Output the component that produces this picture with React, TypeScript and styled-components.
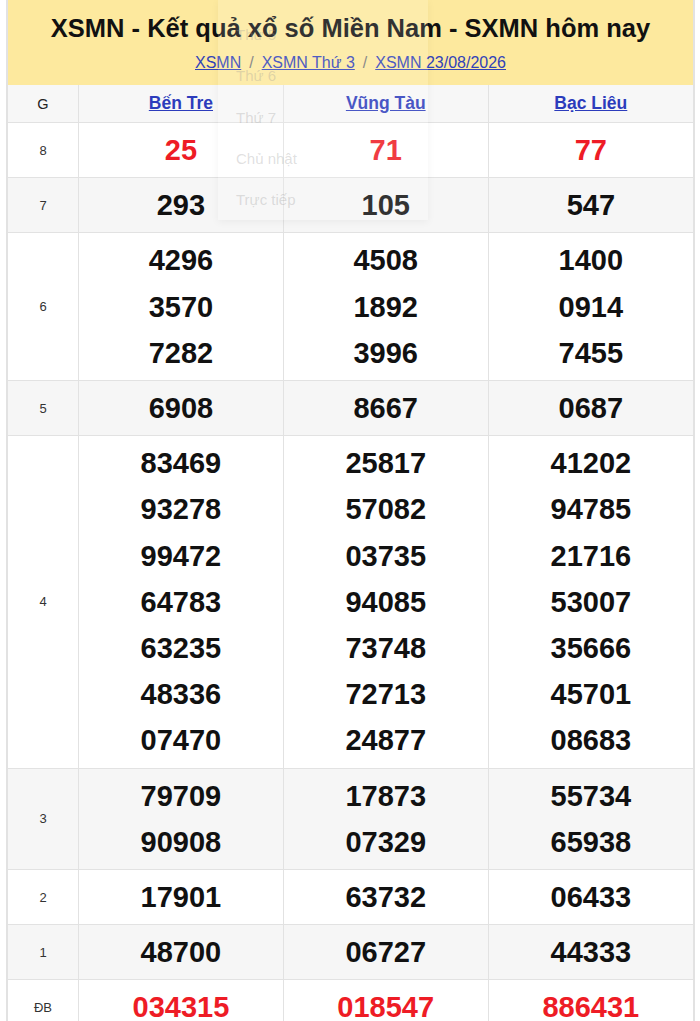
import React from "react";
import styled, { createGlobalStyle } from "styled-components";

const Global = createGlobalStyle`
  html, body { margin: 0; padding: 0; background: #fff; }
  body { font-family: "Liberation Sans", Arial, sans-serif; }
`;

const Page = styled.div`
  position: relative;
  width: 700px;
  height: 1021px;
  overflow: hidden;
`;

const Box = styled.div`
  margin-left: 6px;
  width: 689px;
  border-left: 2px solid #e2e2e2;
  border-right: 2px solid #e2e2e2;
  box-sizing: border-box;
`;

const Header = styled.div`
  background: #fde99e;
  height: 85px;
  box-sizing: border-box;
  padding-top: 13px;
  text-align: center;
`;

const Title = styled.h1`
  margin: 0;
  font-size: 25.5px;
  line-height: 31px;
  font-weight: bold;
  color: #111;
`;

const Crumbs = styled.div`
  margin-top: 10px;
  font-size: 16px;
  line-height: 18px;
  color: #777;
  display: flex;
  justify-content: center;
  gap: 8px;
`;

const Crumb = styled.a`
  color: #3142b8;
  text-decoration: underline;
`;

const Table = styled.table`
  width: 100%;
  border-collapse: collapse;
  table-layout: fixed;
`;

const Th = styled.th<{ $w?: number }>`
  width: ${(p) => (p.$w ? `${p.$w}px` : "auto")};
  height: 37px;
  padding: 0;
  background: #f7f7f7;
  border: 1px solid #e2e2e2;
  border-top: none;
  font-size: 17.5px;
  font-weight: bold;
  text-align: center;
  &:first-child { border-left: none; font-weight: normal; font-size: 14.5px; color: #222; }
  &:last-child { border-right: none; }
`;

const Prov = styled.a`
  color: #2c3cbc;
  text-decoration: underline;
`;

const Tr = styled.tr<{ $alt: boolean }>`
  background: ${(p) => (p.$alt ? "#f6f6f6" : "#fff")};
`;

const Label = styled.td`
  border: 1px solid #e2e2e2;
  border-left: none;
  text-align: center;
  font-size: 13px;
  color: #333;
  padding: 0;
`;

const Cell = styled.td<{ $red: boolean }>`
  border: 1px solid #e2e2e2;
  padding: 4px 0;
  text-align: center;
  font-size: 29px;
  font-weight: bold;
  line-height: 46.2px;
  color: ${(p) => (p.$red ? "#ee1c25" : "#111")};
  &:last-child { border-right: none; }
`;

const Num = styled.div``;

const Dropdown = styled.div`
  position: absolute;
  left: 218px;
  top: 0;
  width: 210px;
  height: 220px;
  background: rgba(255, 255, 255, 0.14);
  box-shadow: 0 2px 8px rgba(0, 0, 0, 0.05);
  padding: 14px 0 0 18px;
  box-sizing: border-box;
`;

const DropItem = styled.div`
  font-size: 15px;
  line-height: 41.3px;
  color: rgba(150, 150, 150, 0.3);
`;

type Row = { g: string; vals: string[][]; red?: boolean };

const rows: Row[] = [
  { g: "8", vals: [["25"], ["71"], ["77"]], red: true },
  { g: "7", vals: [["293"], ["105"], ["547"]] },
  { g: "6", vals: [["4296", "3570", "7282"], ["4508", "1892", "3996"], ["1400", "0914", "7455"]] },
  { g: "5", vals: [["6908"], ["8667"], ["0687"]] },
  {
    g: "4",
    vals: [
      ["83469", "93278", "99472", "64783", "63235", "48336", "07470"],
      ["25817", "57082", "03735", "94085", "73748", "72713", "24877"],
      ["41202", "94785", "21716", "53007", "35666", "45701", "08683"],
    ],
  },
  { g: "3", vals: [["79709", "90908"], ["17873", "07329"], ["55734", "65938"]] },
  { g: "2", vals: [["17901"], ["63732"], ["06433"]] },
  { g: "1", vals: [["48700"], ["06727"], ["44333"]] },
  { g: "ĐB", vals: [["034315"], ["018547"], ["886431"]], red: true },
];

export default function App() {
  return (
    <Page>
      <Global />
      <Box>
        <Header>
          <Title>XSMN - Kết quả xổ số Miền Nam - SXMN hôm nay</Title>
          <Crumbs>
            <Crumb>XSMN</Crumb>
            <span>/</span>
            <Crumb>XSMN Thứ 3</Crumb>
            <span>/</span>
            <Crumb>XSMN 23/08/2026</Crumb>
          </Crumbs>
        </Header>
        <Table>
          <thead>
            <tr>
              <Th $w={70}>G</Th>
              <Th><Prov>Bến Tre</Prov></Th>
              <Th><Prov>Vũng Tàu</Prov></Th>
              <Th><Prov>Bạc Liêu</Prov></Th>
            </tr>
          </thead>
          <tbody>
            {rows.map((r, i) => (
              <Tr key={r.g} $alt={i % 2 === 1}>
                <Label>{r.g}</Label>
                {r.vals.map((v, j) => (
                  <Cell key={j} $red={!!r.red}>
                    {v.map((n) => (
                      <Num key={n}>{n}</Num>
                    ))}
                  </Cell>
                ))}
              </Tr>
            ))}
          </tbody>
        </Table>
      </Box>
      <Dropdown>
        {["Thứ 5", "Thứ 6", "Thứ 7", "Chủ nhật", "Trực tiếp"].map((t) => (
          <DropItem key={t}>{t}</DropItem>
        ))}
      </Dropdown>
    </Page>
  );
}
